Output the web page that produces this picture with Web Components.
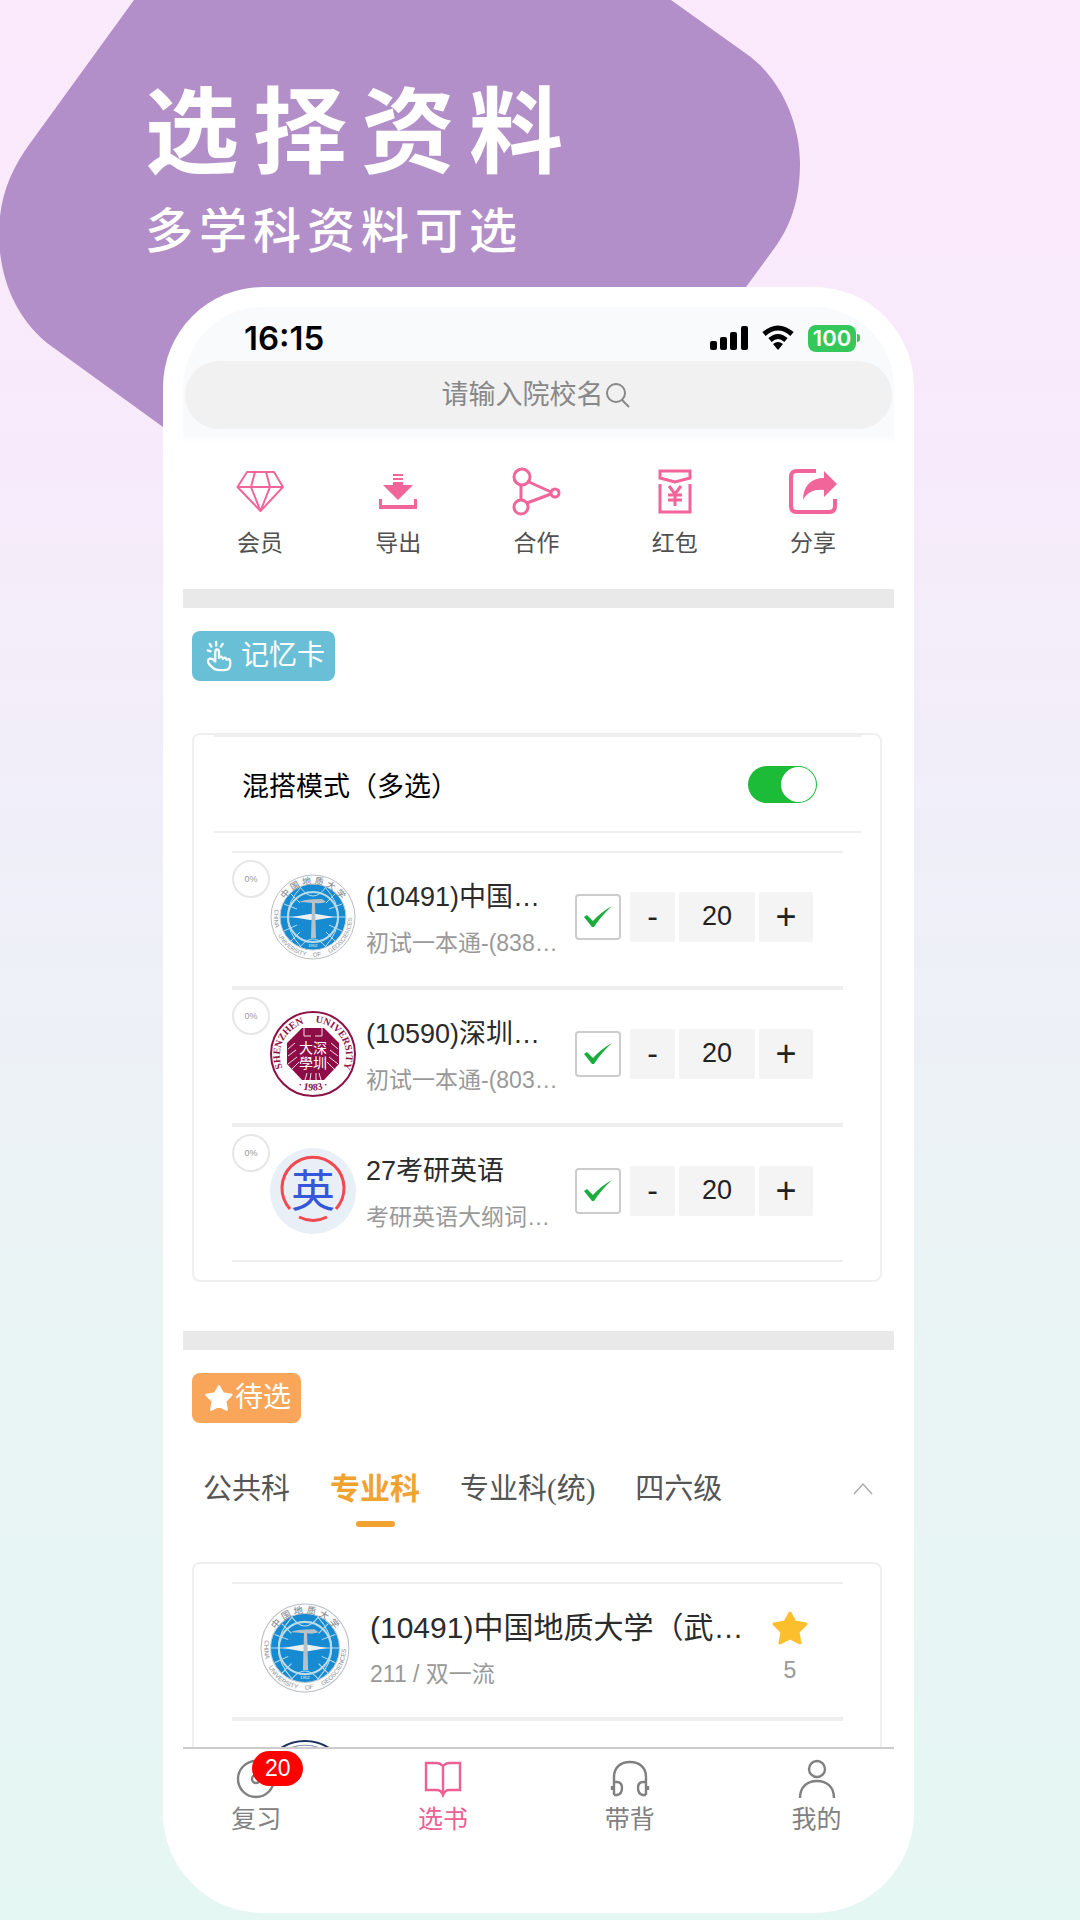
<!DOCTYPE html>
<html lang="zh-CN">
<head>
<meta charset="UTF-8">
<meta name="viewport" content="width=device-width, initial-scale=1.0">
<title>选择资料</title>
<style>
  body {
    margin: 0;
    font-family: "Liberation Sans", "Noto Sans CJK SC", sans-serif;
    color: #2b2b2b;
  }
</style>
</head>
<body>
<promo-page>
  <span slot="title">选择资料</span>
  <span slot="subtitle">多学科资料可选</span>
  <phone-frame>
    <status-bar slot="head" time="16:15" battery="100"></status-bar>
    <school-search slot="head" hint="请输入院校名"></school-search>

    <quick-actions></quick-actions>

    <page-section>
      <section-tag icon="tap" color="#69bfd6">记忆卡</section-tag>
      <deck-card></deck-card>
    </page-section>

    <page-section>
      <section-tag icon="star" color="#faa65a">待选</section-tag>
      <subject-tabs></subject-tabs>
      <book-card></book-card>
    </page-section>

    <tab-bar slot="foot"></tab-bar>
  </phone-frame>
</promo-page>

<script>
// 所有线条图标,统一由 <app-icon name="..."> 使用
const ICONS = {
  diamond: ['0 0 48 48', '<path d="M11 4H38L47 19 24.5 43 1.5 19ZM1.5 19H47M19 4L15 19 24.5 43 34 19 30 4" fill="none" stroke="currentColor" stroke-width="2" stroke-linejoin="round"/>'],
  download: ['0 0 48 48', '<path d="M19 6H29V8H19ZM19 10H29V12H19ZM19 14H29V17H39L24 32 9 17H19ZM5 31H8V37H40V31H43V41H5Z" fill="currentColor"/>'],
  nodes: ['0 0 48 48', '<g fill="none" stroke="currentColor" stroke-width="3"><circle cx="10" cy="9" r="8"/><circle cx="9" cy="39" r="7"/><circle cx="43" cy="25" r="4"/><path d="M9 17V32M17 14L39 24M15 35L39 26"/></g>'],
  packet: ['0 0 48 48', '<g fill="none" stroke="currentColor" stroke-width="3"><path d="M9 3H39V10L24 14 9 10ZM9 16V44H39V16"/><path d="M18 18L24 26 30 18M24 26V38M17 27H31M17 32H31"/></g>'],
  share: ['0 0 48 48', '<path d="M27 3H8Q2 3 2 9V38Q2 44 8 44H40Q46 44 46 38V31" fill="none" stroke="currentColor" stroke-width="4"/><path d="M35 3L48 16 35 29V22C26 21 18 24 14 32 14 18 22 10 35 10Z" fill="currentColor"/>'],
  search: ['0 0 24 24', '<g fill="none" stroke="currentColor" stroke-width="2"><circle cx="10" cy="10" r="9"/><path d="M16 17L23 24"/></g>'],
  tap: ['0 0 28 32', '<g fill="none" stroke="currentColor" stroke-width="2.4" stroke-linecap="round" stroke-linejoin="round"><path d="M10 22V12Q10 9 12 9T14 12V18Q17 15 18 19Q21 16 22 20Q26 18 26 22V25Q26 31 19 31H14Q8 31 3 24Q1 20 4 19Q7 18 10 22"/><path d="M11 1V5M4 3L6 6M18 3L16 6M2 10L5 11"/></g>'],
  star: ['0 0 36 34', '<path d="M18 2L23 11 34 13 26 21 28 32 18 27 8 32 10 21 2 13 13 11Z" fill="currentColor" stroke="currentColor" stroke-width="3" stroke-linejoin="round"/>'],
  check: ['0 0 30 24', '<path d="M1 12L4 10 10 16Q18 7 29 1Q18 11 11 22H9Z" fill="currentColor"/>'],
  up: ['0 0 20 12', '<path d="M1 11L10 1 19 11" fill="none" stroke="currentColor" stroke-width="1.5"/>'],
  clock: ['0 0 40 40', '<g fill="none" stroke="currentColor" stroke-width="2.4"><circle cx="20" cy="20" r="18"/><circle cx="20" cy="20" r="4"/></g>'],
  book: ['0 0 40 40', '<path d="M20 7Q17 4 14 4H3V31H14Q18 31 20 36Q22 31 26 31H37V4H26Q23 4 20 7V35" fill="none" stroke="currentColor" stroke-width="2.4"/>'],
  phones: ['0 0 40 40', '<g fill="none" stroke="currentColor" stroke-width="2.4"><path d="M4 36V18C4 8 11 3 20 3S36 8 36 18V36M4 23H7Q12 23 12 29T7 36H4M36 23H33Q28 23 28 29T33 36H36"/><path d="M2 27V31M38 27V31"/></g>'],
  person: ['0 0 40 40', '<g fill="none" stroke="currentColor" stroke-width="2.4"><circle cx="20" cy="10" r="8"/><path d="M3 39C3 28 10 22 20 22S37 28 37 39"/></g>'],
  signal: ['0 0 38 24', '<g fill="currentColor"><rect y="15" width="7" height="9" rx="2"/><rect x="10" y="11" width="7" height="13" rx="2"/><rect x="20" y="6" width="7" height="18" rx="2"/><rect x="31" width="7" height="24" rx="2"/></g>'],
  wifi: ['0 0 32 24', '<path d="M2 8Q16 -4 30 8M8 14Q16 7 24 14" fill="none" stroke="currentColor" stroke-width="5"/><path d="M11 18Q16 14 21 18L16 24Z" fill="currentColor"/>']
};

// 校徽
const CRESTS = {
  geo: `
    <defs>
      <path id="top" d="M10 43A33 33 0 0 1 76 43"/>
      <path id="low" d="M5 35A39 39 0 1 0 81 35"/>
    </defs>
    <circle cx="43" cy="43" r="42" fill="#fdfdfd" stroke="#b9bdc2"/>
    <circle cx="43" cy="43" r="33" fill="#168bd1" stroke="#c5cdd4"/>
    <g fill="none" stroke="#bcdcec">
      <circle cx="43" cy="43" r="25" stroke-width="2"/>
      <path d="M30 13Q43 31 56 13M30 73Q43 57 56 73M10 43H76M14 30L27 35M14 57L27 51M72 30L59 35M72 57L59 51M21 20L30 29M65 20L56 29M21 67L30 58M65 67L56 58"/>
      <path d="M31 13Q4 43 31 73M55 13Q82 43 55 73"/>
    </g>
    <path d="M22 43L40 40H46L64 43 46 46H40Z" fill="#eef1f3"/>
    <path d="M29 28Q34 25 52 25L56 28Q50 30 45 29L46 64H41L42 29Q35 28 29 28Z" fill="#b8c1c8"/>
    <text x="43" y="73" text-anchor="middle" font-size="4" fill="#fff">1952</text>
    <g fill="#8d9298" text-anchor="middle">
      <text font-size="9" font-weight="500"><textPath href="#top" startOffset="50%">中 国 地 质 大 学</textPath></text>
      <g font-size="6">
        <text><textPath href="#low" startOffset="7%">CHINA</textPath></text>
        <text><textPath href="#low" startOffset="32%">UNIVERSITY</textPath></text>
        <text><textPath href="#low" startOffset="53%">OF</textPath></text>
        <text><textPath href="#low" startOffset="78%">GEOSCIENCES</textPath></text>
      </g>
    </g>`,
  szu: `
    <defs>
      <path id="ring" d="M19 67A33 33 0 1 1 67 67"/>
      <path id="low" d="M14 66A38 38 0 0 0 72 66"/>
    </defs>
    <circle cx="43" cy="43" r="42" fill="#fff" stroke="#8e1146" stroke-width="2"/>
    <path d="M32 17H54L69 32V53L54 69H32L17 53V32Z" fill="#8e0d46"/>
    <g stroke="#f0dfe7" fill="none">
      <path d="M34 17V25H41M52 17V25H45M18 38L25 32M18 45L26 39M18 53L27 46M22 58L29 51M68 38L61 32M68 45L60 39M68 53L59 46M64 58L57 51M35 69L37 62M40 69L41 62M46 69V62M51 69L49 62"/>
    </g>
    <g fill="#fff" font-size="14" text-anchor="middle">
      <text x="36" y="42">大</text><text x="50" y="42">深</text>
      <text x="36" y="57">學</text><text x="50" y="57">圳</text>
    </g>
    <g fill="#8e1146" font-family="Liberation Serif, serif" font-weight="bold" font-size="10" text-anchor="middle">
      <text><textPath href="#ring" startOffset="26%">SHENZHEN</textPath></text>
      <text><textPath href="#ring" startOffset="72%">UNIVERSITY</textPath></text>
      <text><textPath href="#low" startOffset="50%">· 1983 ·</textPath></text>
    </g>`,
  eng: `
    <circle cx="43" cy="43" r="43" fill="#e8eff6"/>
    <path d="M20 61A31 31 0 1 1 66 61M29 69Q43 76 57 69" fill="none" stroke="#f0494f" stroke-width="3"/>
    <text x="43" y="59" text-anchor="middle" font-size="44" fill="#3557dc">英</text>`,
  navy: `
    <circle cx="43" cy="43" r="42" fill="#fff" stroke="#1d3461" stroke-width="2"/>
    <circle cx="43" cy="43" r="38" fill="none" stroke="#7f8fae"/>
    <circle cx="43" cy="43" r="28" fill="#1d3461"/>`
};

class AppIcon extends HTMLElement {
  connectedCallback() {
    const [box, body] = ICONS[this.getAttribute('name')];
    this.attachShadow({ mode: 'open' }).innerHTML = `
      <style>
        :host { display: block; flex: none; }
        svg { display: block; width: 100%; height: 100%; overflow: visible; }
      </style>
      <svg viewBox="${box}" aria-hidden="true">${body}</svg>
    `;
  }
}
customElements.define('app-icon', AppIcon);

class SchoolCrest extends HTMLElement {
  connectedCallback() {
    this.attachShadow({ mode: 'open' }).innerHTML = `
      <style>
        :host { display: block; flex: none; width: 86px; height: 86px; }
        svg { display: block; width: 100%; height: 100%; }
      </style>
      <svg viewBox="0 0 86 86">${CRESTS[this.getAttribute('name')]}</svg>
    `;
  }
}
customElements.define('school-crest', SchoolCrest);

// 整页背景 + 大标题
class PromoPage extends HTMLElement {
  constructor() {
    super();
    this.attachShadow({ mode: 'open' }).innerHTML = `
      <style>
        :host {
          display: flex;
          flex-direction: column;
          position: relative;
          height: 100vh;
          overflow: hidden;
          background: linear-gradient(#fbe9fc 0%, #f8eafb 20%, #efeff8 45%, #e9f4f4 70%, #e5f7f3 100%);
        }
        .blob { position: absolute; left: 0; top: 0; width: 802px; height: 430px; }
        header {
          position: relative;
          padding: 80px 0 27px 145px;
          color: #fff;
        }
        h1, p { margin: 0; }
        h1 { font-size: 94px; font-weight: bold; line-height: 108px; letter-spacing: 14px; }
        p { margin-top: 16px; font-size: 48px; font-weight: 500; line-height: 56px; letter-spacing: 6px; }
        main {
          position: relative;
          flex: 1;
          min-height: 0;
          display: flex;
          padding: 0 166px 7px 163px;
        }
      </style>
      <svg class="blob" viewBox="0 0 802 430" aria-hidden="true">
        <path d="M134 0L31 142C8 173 -2 203 -1 240C1 280 15 316 47 343L163 427H640L746 287L776 246C793 222 800 195 800 163C800 122 780 78 748 55L671 0Z" fill="#b28fc8"/>
      </svg>
      <header>
        <h1><slot name="title"></slot></h1>
        <p><slot name="subtitle"></slot></p>
      </header>
      <main><slot></slot></main>
    `;
  }
}
customElements.define('promo-page', PromoPage);

class PhoneFrame extends HTMLElement {
  constructor() {
    super();
    this.attachShadow({ mode: 'open' }).innerHTML = `
      <style>
        :host {
          display: flex;
          flex-direction: column;
          flex: 1;
          min-width: 0;
          border-radius: 100px;
          background: #fff;
          overflow: hidden;
        }
        .head {
          margin: 20px 20px 0;
          padding-bottom: 14px;
          border-radius: 80px 80px 0 0;
          background: linear-gradient(#f8fafc 94%, #fff);
        }
        .scroll {
          flex: 1;
          min-height: 0;
          margin: 0 20px;
          overflow: hidden;
        }
      </style>
      <div class="head"><slot name="head"></slot></div>
      <div class="scroll"><slot></slot></div>
      <slot name="foot"></slot>
    `;
  }
}
customElements.define('phone-frame', PhoneFrame);

class StatusBar extends HTMLElement {
  connectedCallback() {
    this.attachShadow({ mode: 'open' }).innerHTML = `
      <style>
        :host {
          display: flex;
          align-items: center;
          gap: 14px;
          padding: 8px 34px 0 61px;
          height: 46px;
          color: #000;
          font-family: Inter, sans-serif;
          font-weight: 600;
        }
        time { flex: 1; font-size: 33px; }
        .signal { width: 38px; height: 24px; }
        .wifi { width: 32px; height: 24px; }
        .battery { display: flex; align-items: center; gap: 1px; }
        .level {
          width: 48px;
          border-radius: 8px;
          background: #34c759;
          color: #fff;
          font-size: 22px;
          line-height: 27px;
          text-align: center;
        }
        .nub { width: 3px; height: 8px; border-radius: 0 3px 3px 0; background: #34c759; }
      </style>
      <time>${this.getAttribute('time')}</time>
      <app-icon class="signal" name="signal"></app-icon>
      <app-icon class="wifi" name="wifi"></app-icon>
      <div class="battery">
        <span class="level">${this.getAttribute('battery')}</span>
        <span class="nub"></span>
      </div>
    `;
  }
}
customElements.define('status-bar', StatusBar);

class SchoolSearch extends HTMLElement {
  connectedCallback() {
    const hint = this.getAttribute('hint');
    this.attachShadow({ mode: 'open' }).innerHTML = `
      <style>
        :host { display: block; margin: 0 2px; }
        label {
          display: flex;
          align-items: center;
          justify-content: center;
          height: 68px;
          padding-right: 6px;
          gap: 2px;
          border-radius: 34px;
          background: #f1f1f1;
          color: #888;
        }
        input {
          width: 162px;
          padding: 0;
          border: 0;
          background: none;
          font: inherit;
          font-size: 27px;
          line-height: 40px;
          color: inherit;
          outline: none;
        }
        input::placeholder { color: #888; opacity: 1; }
        app-icon { width: 24px; height: 24px; }
      </style>
      <label>
        <input type="text" placeholder="${hint}" aria-label="${hint}">
        <app-icon name="search"></app-icon>
      </label>
    `;
  }
}
customElements.define('school-search', SchoolSearch);

// 五个快捷入口
class QuickActions extends HTMLElement {
  constructor() {
    super();
    this.items = [
      ['diamond', '会员'],
      ['download', '导出'],
      ['nodes', '合作'],
      ['packet', '红包'],
      ['share', '分享']
    ];
  }

  connectedCallback() {
    this.attachShadow({ mode: 'open' }).innerHTML = `
      <style>
        :host {
          display: grid;
          grid-template-columns: repeat(5, 1fr);
          padding: 25px 12px 32px 8px;
        }
        button {
          display: flex;
          flex-direction: column;
          align-items: center;
          gap: 13px;
          padding: 0;
          border: 0;
          background: none;
          font: inherit;
          font-size: 23px;
          line-height: 28px;
          color: #505050;
        }
        app-icon { width: 48px; height: 48px; color: #f2659a; }
      </style>
      ${this.items.map(([icon, text]) => `
        <button type="button"><app-icon name="${icon}"></app-icon>${text}</button>
      `).join('')}
    `;
  }
}
customElements.define('quick-actions', QuickActions);

class PageSection extends HTMLElement {
  constructor() {
    super();
    this.attachShadow({ mode: 'open' }).innerHTML = `
      <style>
        :host {
          display: block;
          border-top: 19px solid #e9e9e9;
          padding: 23px 12px 49px 9px;
        }
      </style>
      <slot></slot>
    `;
  }
}
customElements.define('page-section', PageSection);

class SectionTag extends HTMLElement {
  connectedCallback() {
    this.attachShadow({ mode: 'open' }).innerHTML = `
      <style>
        :host {
          display: flex;
          align-items: center;
          width: fit-content;
          gap: 2px;
          padding: 0 10px 0 13px;
          border-radius: 8px;
          background: ${this.getAttribute('color')};
          color: #fff;
          font-size: 28px;
          line-height: 50px;
        }
        :host([icon="tap"]) { gap: 8px; }
        app-icon { width: 28px; height: 30px; }
      </style>
      <app-icon name="${this.getAttribute('icon')}"></app-icon>
      <slot></slot>
    `;
  }
}
customElements.define('section-tag', SectionTag);

// 数量加减
class QtyStepper extends HTMLElement {
  connectedCallback() {
    this.attachShadow({ mode: 'open' }).innerHTML = `
      <style>
        :host { display: flex; gap: 4px; }
        button, input {
          box-sizing: border-box;
          height: 50px;
          padding: 0;
          border: 0;
          border-radius: 2px;
          background: #f4f4f4;
          font: inherit;
          font-size: 27px;
          color: #222;
          text-align: center;
        }
        .minus { width: 45px; font-size: 32px; }
        input { width: 76px; }
        .plus { width: 54px; font-size: 36px; }
      </style>
      <button class="minus" type="button" aria-label="减少">-</button>
      <input type="text" inputmode="numeric" aria-label="数量" value="${this.getAttribute('value')}">
      <button class="plus" type="button" aria-label="增加">+</button>
    `;
    const input = this.shadowRoot.querySelector('input');
    this.shadowRoot.querySelector('.minus').addEventListener('click', () => {
      input.value = Math.max(0, Number(input.value) - 1);
    });
    this.shadowRoot.querySelector('.plus').addEventListener('click', () => {
      input.value = Number(input.value) + 1;
    });
  }
}
customElements.define('qty-stepper', QtyStepper);

// 两张卡片共用的样式
const cardStyle = `
  :host {
    display: block;
    border: 2px solid #efeff2;
    border-radius: 8px;
  }
  ul { list-style: none; margin: 0 37px 0 38px; padding: 18px 0; }
  li {
    box-sizing: border-box;
    display: flex;
    align-items: center;
    height: 137px;
    padding-bottom: 6px;
    border: solid #eee;
    border-width: 2px 0;
  }
  .text {
    flex: 1;
    min-width: 0;
    display: flex;
    flex-direction: column;
    gap: 12px;
    padding-top: 4px;
    white-space: nowrap;
  }
  .name { line-height: 36px; }
  .note { font-size: 23px; line-height: 32px; color: #999; }
`;

class DeckCard extends HTMLElement {
  constructor() {
    super();
    this.decks = [
      { crest: 'geo', name: '(10491)中国…', note: '初试一本通-(838…', count: 20 },
      { crest: 'szu', name: '(10590)深圳…', note: '初试一本通-(803…', count: 20 },
      { crest: 'eng', name: '27考研英语', note: '考研英语大纲词…', count: 20 }
    ];
  }

  connectedCallback() {
    this.attachShadow({ mode: 'open' }).innerHTML = `
      <style>
        ${cardStyle}
        :host { margin-top: 52px; }
        .mode {
          display: flex;
          align-items: center;
          justify-content: space-between;
          height: 94px;
          margin: 0 19px 0 20px;
          padding: 0 44px 0 28px;
          border: solid #eee;
          border-width: 2px 0;
          font-size: 27px;
          color: #000;
        }
        .switch {
          appearance: none;
          box-sizing: border-box;
          display: flex;
          justify-content: flex-end;
          width: 69px;
          height: 37px;
          margin: 0;
          padding: 1px;
          border-radius: 19px;
          background: #1cbb38;
        }
        .switch::before {
          content: "";
          width: 35px;
          border-radius: 50%;
          background: #fff;
        }
        .switch:not(:checked) { justify-content: flex-start; background: #ddd; }
        .percent {
          box-sizing: border-box;
          align-self: flex-start;
          width: 38px;
          height: 38px;
          margin-top: 7px;
          border: 2px solid #e6e6e6;
          border-radius: 50%;
          font-size: 9px;
          line-height: 34px;
          text-align: center;
          color: #999;
        }
        .text { margin-left: 10px; }
        .name { font-size: 27px; }
        .pick { display: grid; place-items: center; margin-right: 9px; color: #1aad3c; }
        .pick > * { grid-area: 1 / 1; }
        .pick input {
          appearance: none;
          box-sizing: border-box;
          width: 46px;
          height: 46px;
          margin: 0;
          border: 2px solid #ccc;
          border-radius: 4px;
        }
        .pick app-icon { width: 30px; height: 24px; pointer-events: none; }
        .pick input:not(:checked) + app-icon { visibility: hidden; }
        qty-stepper { margin-right: 30px; }
      </style>
      <div class="mode">
        <label for="mix">混搭模式（多选）</label>
        <input class="switch" id="mix" type="checkbox" role="switch" checked>
      </div>
      <ul>
        ${this.decks.map(d => `
          <li>
            <span class="percent">0%</span>
            <school-crest name="${d.crest}"></school-crest>
            <div class="text">
              <span class="name">${d.name}</span>
              <span class="note">${d.note}</span>
            </div>
            <label class="pick">
              <input type="checkbox" aria-label="${d.name}" checked>
              <app-icon name="check"></app-icon>
            </label>
            <qty-stepper value="${d.count}"></qty-stepper>
          </li>
        `).join('')}
      </ul>
    `;
  }
}
customElements.define('deck-card', DeckCard);

class SubjectTabs extends HTMLElement {
  constructor() {
    super();
    this.tabs = ['公共科', '专业科', '专业科(统)', '四六级'];
    this.active = 1;
  }

  connectedCallback() {
    this.attachShadow({ mode: 'open' }).innerHTML = `
      <style>
        :host {
          display: flex;
          align-items: flex-start;
          gap: 40px;
          margin-top: 44px;
          padding: 0 9px 0 11px;
          font-family: "Liberation Serif", "Noto Sans CJK SC", serif;
        }
        button {
          padding: 0;
          border: 0;
          background: none;
          font: inherit;
          font-size: 29px;
          line-height: 44px;
          color: #555;
        }
        .tab::after {
          content: "";
          display: block;
          width: 39px;
          height: 6px;
          margin: 10px auto 0;
          border-radius: 3px;
        }
        .on { font-size: 30px; font-weight: bold; color: #f0a330; }
        .on::after { background: #f0a330; }
        .fold { margin: 16px 0 0 auto; color: #aaa; }
        .fold app-icon { width: 20px; height: 12px; }
      </style>
      ${this.tabs.map((t, i) => `
        <button type="button" class="tab ${i === this.active ? 'on' : ''}">${t}</button>
      `).join('')}
      <button class="fold" type="button" aria-label="收起"><app-icon name="up"></app-icon></button>
    `;
    const tabs = this.shadowRoot.querySelectorAll('.tab');
    tabs.forEach(tab => tab.addEventListener('click', () => {
      tabs.forEach(t => t.classList.toggle('on', t === tab));
    }));
  }
}
customElements.define('subject-tabs', SubjectTabs);

class BookCard extends HTMLElement {
  constructor() {
    super();
    this.books = [
      { crest: 'geo', name: '(10491)中国地质大学（武…', note: '211 / 双一流', stars: '5' },
      { crest: 'navy', name: '', note: '', stars: '' }
    ];
  }

  connectedCallback() {
    this.attachShadow({ mode: 'open' }).innerHTML = `
      <style>
        ${cardStyle}
        :host { margin-top: 35px; }
        li { padding-left: 28px; padding-right: 35px; }
        school-crest { width: 90px; height: 90px; margin-right: 20px; }
        .name { min-height: 36px; font-size: 30px; }
        .note { min-height: 32px; }
        .fav { display: flex; flex-direction: column; align-items: center; gap: 8px; }
        .fav button { padding: 0; border: 0; background: none; color: #fbbf2d; }
        .fav app-icon { width: 36px; height: 36px; }
      </style>
      <ul>
        ${this.books.map(b => `
          <li>
            <school-crest name="${b.crest}"></school-crest>
            <div class="text">
              <span class="name">${b.name}</span>
              <span class="note">${b.note}</span>
            </div>
            <div class="fav">
              <button type="button" aria-label="收藏"><app-icon name="star"></app-icon></button>
              <span class="note">${b.stars}</span>
            </div>
          </li>
        `).join('')}
      </ul>
    `;
  }
}
customElements.define('book-card', BookCard);

// 底部导航
class TabBar extends HTMLElement {
  constructor() {
    super();
    this.items = [
      { icon: 'clock', text: '复习', badge: 20 },
      { icon: 'book', text: '选书', on: true },
      { icon: 'phones', text: '带背' },
      { icon: 'person', text: '我的' }
    ];
  }

  connectedCallback() {
    this.attachShadow({ mode: 'open' }).innerHTML = `
      <style>
        :host { display: block; padding-bottom: 78px; }
        hr { margin: 0 20px; border: 0; height: 2px; background: #ccc; }
        nav {
          display: grid;
          grid-template-columns: repeat(4, 1fr);
          padding: 10px 4px 0 0;
        }
        a {
          display: flex;
          flex-direction: column;
          align-items: center;
          gap: 4px;
          font-size: 25px;
          line-height: 32px;
          color: #808080;
          text-decoration: none;
        }
        a.on { color: #ee5f94; }
        .pic { position: relative; }
        app-icon { width: 40px; height: 40px; }
        .badge {
          position: absolute;
          left: 16px;
          top: -8px;
          width: 51px;
          border-radius: 18px;
          background: #fe0000;
          color: #fff;
          font-size: 23px;
          line-height: 35px;
          text-align: center;
        }
      </style>
      <hr>
      <nav>
        ${this.items.map(t => `
          <a href="#" class="${t.on ? 'on' : ''}">
            <span class="pic">
              <app-icon name="${t.icon}"></app-icon>
              ${t.badge ? `<span class="badge">${t.badge}</span>` : ''}
            </span>
            ${t.text}
          </a>
        `).join('')}
      </nav>
    `;
  }
}
customElements.define('tab-bar', TabBar);
</script>
</body>
</html>
